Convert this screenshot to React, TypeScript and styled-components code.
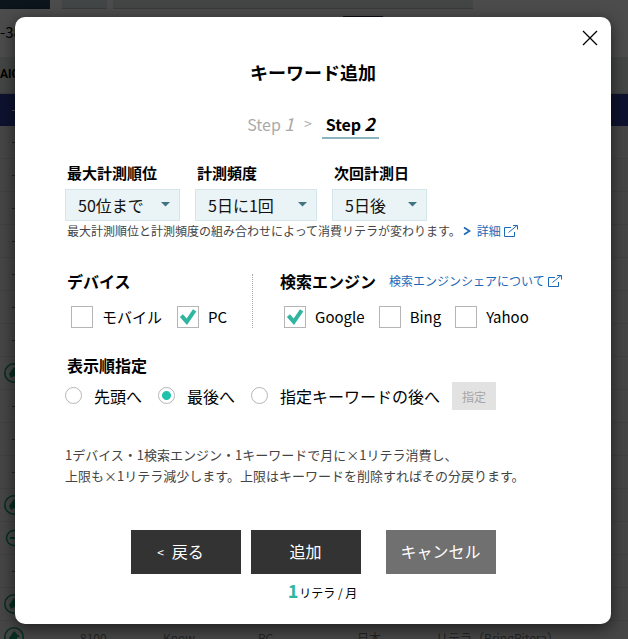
import React from "react";
import styled, { createGlobalStyle, css } from "styled-components";

const GlobalStyle = createGlobalStyle`
  *, *::before, *::after { box-sizing: border-box; }
  body {
    margin: 0;
    color: #000;
    background: #fff;
    font-family: "Noto Sans CJK JP", "Liberation Sans", sans-serif;
    font-size: 16px;
  }
  button, select, input { font: inherit; color: inherit; }
  h1, h2, p, fieldset { margin: 0; padding: 0; border: 0; }
`;

const Shell = styled.div`
  position: relative;
  height: 100vh;
  overflow: hidden;
`;

/* ---- page behind the dialog ---- */

const Page = styled.div`
  display: flex;
  flex-direction: column;
`;

const Toolbar = styled.div`
  display: flex;
  height: 16px;
  align-items: flex-start;
`;

const ToolBlock = styled.div<{ $width: number; $tone: string; $gap?: number }>`
  width: ${(p) => p.$width}px;
  height: 9px;
  margin-right: ${(p) => p.$gap ?? 0}px;
  background: ${(p) => p.$tone};
  border-bottom: 1px solid rgba(0, 0, 0, 0.15);
`;

const Marker = styled.div`
  width: 40px;
  height: 2px;
  margin-left: 343px;
  background: #26364c;
`;

const Range = styled.div`
  height: 39px;
  font-size: 15px;
  line-height: 28px;
  white-space: nowrap;
`;

const HeadRow = styled.div`
  height: 37px;
  line-height: 35px;
  background: #e4ebe7;
  border-bottom: 1px solid #c8d0cc;
  font-family: Roboto, sans-serif;
  font-size: 12px;
  font-weight: 700;
`;

const Row = styled.div<{ $active?: boolean }>`
  display: grid;
  grid-template-columns: 80px 83px 95px 99px 79px 1fr;
  align-items: center;
  height: ${(p) => (p.$active ? 32 : 33)}px;
  color: ${(p) => (p.$active ? "#fff" : "#777")};
  background: ${(p) => (p.$active ? "#303f9f" : "#e7ebe8")};
  border-bottom: 1px solid ${(p) => (p.$active ? "#303f9f" : "#d8ddda")};
  font-size: 12px;
  white-space: nowrap;
`;

const State = styled.span`
  display: flex;
  padding-left: 4px;
`;

const Overlay = styled.div`
  position: absolute;
  inset: 0;
  padding: 17px 17px 15px 15px;
  background: rgba(0, 0, 0, 0.7);
`;

/* ---- dialog ---- */

const Dialog = styled.section`
  position: relative;
  padding: 44px 50px 23px 50px;
  background: #fff;
  border-radius: 10px;
  box-shadow: 0 4px 16px rgba(0, 0, 0, 0.6);
`;

const CloseButton = styled.button`
  position: absolute;
  top: 12px;
  right: 12px;
  display: flex;
  padding: 0;
  border: 0;
  background: none;
  cursor: pointer;
`;

const Title = styled.h1`
  font-size: 18px;
  line-height: 22px;
  font-weight: 700;
  text-align: center;
`;

const Steps = styled.div`
  display: flex;
  justify-content: center;
  gap: 10px;
  margin-top: 30px;
  line-height: 20px;
  color: #aaa;
`;

const Step = styled.span<{ $current?: boolean }>`
  display: flex;
  align-items: baseline;
  gap: 3px;
  height: 26px;
  ${(p) =>
    p.$current &&
    css`
      padding: 0 4px;
      color: #000;
      font-weight: 700;
      border-bottom: 2px solid #8ab4bf;
    `}
  i { font-size: 18px; }
`;

const Arrow = styled.span`
  font-size: 14px;
`;

const Fields = styled.div`
  display: flex;
  gap: 15px;
  margin-top: 23px;
`;

const Field = styled.div`
  display: flex;
  flex-direction: column;
`;

const FieldLabel = styled.label`
  padding-left: 2px;
  font-size: 15px;
  line-height: 22px;
  font-weight: 700;
`;

const SelectBox = styled.div<{ $width: number }>`
  position: relative;
  width: ${(p) => p.$width}px;
  margin-top: 5px;
  svg {
    position: absolute;
    right: 10px;
    top: 13px;
    pointer-events: none;
  }
`;

const Select = styled.select`
  display: block;
  width: 100%;
  height: 32px;
  padding: 0 24px 0 12px;
  appearance: none;
  color: #111;
  background: #eaf3f5;
  border: 1px solid #d5e6eb;
  border-radius: 0;
`;

const Note = styled.p`
  display: flex;
  align-items: center;
  padding-left: 2px;
  color: #444;
  font-size: 12px;
  line-height: 20px;
  white-space: nowrap;
  svg { margin: 0 6px 0 2px; }
`;

const Link = styled.a`
  display: inline-flex;
  align-items: center;
  gap: 3px;
  color: #1c68b8;
  font-size: 12px;
  line-height: 20px;
  text-decoration: none;
  white-space: nowrap;
  && svg { margin: 0; }
`;

const Groups = styled.div`
  display: flex;
  margin-top: 28px;
`;

const OrderGroup = styled.div`
  margin-top: 25px;
`;

const Divider = styled.div`
  height: 54px;
  margin: 5px 27px 0 25px;
  border-left: 1px dotted #aaa;
`;

const GroupHead = styled.div`
  display: flex;
  gap: 13px;
  align-items: center;
  padding-left: 2px;
`;

const GroupHeadFlush = styled(GroupHead)`
  padding-left: 0;
`;

const Heading = styled.h2`
  font-size: 16px;
  line-height: 24px;
  font-weight: 700;
  white-space: nowrap;
`;

const Checks = styled.div<{ $inset: number; $gap: number }>`
  display: flex;
  gap: ${(p) => p.$gap}px;
  margin-top: 13px;
  padding-left: ${(p) => p.$inset}px;
`;

const Choice = styled.label<{ $small?: boolean }>`
  display: flex;
  align-items: center;
  gap: 9px;
  font-size: ${(p) => (p.$small ? 15 : 16)}px;
  line-height: 22px;
  white-space: nowrap;
`;

const CheckInput = styled.input`
  width: 22px;
  height: 22px;
  margin: 0;
  appearance: none;
  border: 1px solid #b5b5b5;
`;

const CheckBox = styled.span`
  position: relative;
  display: flex;
  svg {
    position: absolute;
    left: 2px;
    top: 2px;
    display: none;
    pointer-events: none;
  }
  input:checked + svg { display: block; }
`;

const Radios = styled.div`
  display: flex;
  align-items: center;
  gap: 16px;
  height: 28px;
  margin-top: 5px;
`;

const RadioInput = styled.input`
  width: 17px;
  height: 17px;
  margin: 0 3px 2px 0;
  appearance: none;
  border: 1px solid #b5b5b5;
  border-radius: 50%;
  &:checked {
    background: radial-gradient(circle, #20c3aa 4px, #fff 5px);
  }
`;

const PickButton = styled.button`
  height: 28px;
  margin-left: -4px;
  padding: 0 10px;
  color: #a5a5a5;
  background: #e2e2e2;
  border: 0;
  font-size: 12px;
`;

const Description = styled.p`
  margin-top: 34px;
  color: #444;
  font-size: 13px;
  line-height: 21px;
`;

const Actions = styled.div`
  display: flex;
  justify-content: center;
  gap: 10px;
  margin-top: 44px;
`;

const ActionColumn = styled.div`
  display: flex;
  flex-direction: column;
  align-items: center;
`;

const Action = styled.button<{ $muted?: boolean; $back?: boolean }>`
  width: 110px;
  height: 44px;
  padding: 0 ${(p) => (p.$back ? 10 : 0)}px 3px 0;
  margin-left: ${(p) => (p.$muted ? 15 : 0)}px;
  color: #fff;
  background: ${(p) => (p.$muted ? "#707070" : "#333")};
  border: 0;
  small { margin-right: 8px; font-size: 12px; vertical-align: 1px; }
`;

const Cost = styled.p`
  display: flex;
  align-items: baseline;
  gap: 1px;
  height: 20px;
  margin: 6px 0 1px 26px;
  padding-left: 8px;
  font-size: 12px;
  line-height: 20px;
  white-space: nowrap;
  strong { color: #2fb5a0; font-size: 18px; }
`;

const External = () => (
  <svg width="14" height="12" viewBox="0 0 14 12" fill="none" stroke="#1c68b8">
    <path d="M7 2.5H.5v9h10V7M4.5 7.5l8.5-7M9 .5h4.5v4" />
  </svg>
);

const Caret = () => (
  <svg width="9" height="5" viewBox="0 0 9 5">
    <path d="M0 0h9L4.5 4.5z" fill="#3f7480" />
  </svg>
);

function Rank({ kind }: { kind: string }) {
  if (kind === "dash")
    return <svg width="24" height="24"><path d="M8 12.5h8" stroke="currentColor" /></svg>;
  if (kind === "same")
    return (
      <svg width="24" height="24" fill="none" stroke="#159a68" strokeWidth="1.5">
        <circle cx="10" cy="12" r="7.5" /><path d="M6 12h8" strokeWidth="2" />
      </svg>
    );
  return (
    <svg width="24" height="24">
      <circle cx="10" cy="12" r="9.2" fill="none" stroke="#159a68" strokeWidth="1.6" />
      <path d="M10 6l6 6h-3v5l-3-2-3 2-2-4z" fill="#159a68" />
    </svg>
  );
}

type SelectFieldProps = { id: string; label: string; value: string; width: number };

function SelectField({ id, label, value, width }: SelectFieldProps) {
  return (
    <Field>
      <FieldLabel htmlFor={id}>{label}</FieldLabel>
      <SelectBox $width={width}>
        <Select id={id} defaultValue={value}><option>{value}</option></Select>
        <Caret />
      </SelectBox>
    </Field>
  );
}

function Check({ label, on }: { label: string; on?: boolean }) {
  return (
    <Choice $small>
      <CheckBox>
        <CheckInput type="checkbox" defaultChecked={on} />
        <svg width="18" height="18" viewBox="0 0 18 18" fill="none" stroke="#2fb5a0" strokeWidth="4">
          <path d="M2.4 7.6L7.8 13.8L15.6 2.4" />
        </svg>
      </CheckBox>
      {label}
    </Choice>
  );
}

function Radio({ label, on }: { label: string; on?: boolean }) {
  return (
    <Choice>
      <RadioInput type="radio" name="position" defaultChecked={on} />
      {label}
    </Choice>
  );
}

const rows = [
  "dash", "dash", "dash", "dash", "dash", "dash", "dash", "up",
  "dash", "dash", "dash", "up", "same", "dash", "up", "up",
];

export default function App() {
  return (
    <Shell>
      <GlobalStyle />
      <Page aria-hidden="true">
        <Toolbar>
          <ToolBlock $width={50} $tone="#2c465f" $gap={12} />
          <ToolBlock $width={45} $tone="#e0e9e9" $gap={6} />
          <ToolBlock $width={360} $tone="#e4ebe8" />
        </Toolbar>
        <Marker />
        <Range>-38</Range>
        <HeadRow>AIO</HeadRow>
        <Row $active><State><Rank kind="dash" /></State></Row>
        {rows.map((kind, i) => (
          <Row key={i}>
            <State><Rank kind={kind} /></State>
            {i === rows.length - 1 && (
              <>
                <span>8100</span><span>Know</span><span>PC</span><span>日本</span>
                <span>リテラ（BringRitera）</span>
              </>
            )}
          </Row>
        ))}
      </Page>
      <Overlay>
        <Dialog role="dialog" aria-modal="true" aria-labelledby="title">
          <CloseButton aria-label="閉じる">
            <svg width="18" height="18" stroke="#000" strokeWidth="1.3">
              <path d="M2 2l14 14M16 2L2 16" />
            </svg>
          </CloseButton>
          <Title id="title">キーワード追加</Title>
          <Steps>
            <Step>Step<i>1</i></Step>
            <Arrow>&gt;</Arrow>
            <Step $current>Step<i>2</i></Step>
          </Steps>

          <Fields>
            <SelectField id="rank" label="最大計測順位" value="50位まで" width={115} />
            <SelectField id="freq" label="計測頻度" value="5日に1回" width={122} />
            <SelectField id="next" label="次回計測日" value="5日後" width={95} />
          </Fields>
          <Note>
            最大計測順位と計測頻度の組み合わせによって消費リテラが変わります。
            <svg width="8" height="10" fill="none" stroke="#1c68b8" strokeWidth="1.7">
              <path d="M1 1.5L6.5 5L1 8.5" />
            </svg>
            <Link href="#detail">詳細<External /></Link>
          </Note>

          <Groups>
            <div>
              <GroupHead><Heading>デバイス</Heading></GroupHead>
              <Checks $inset={6} $gap={15}>
                <Check label="モバイル" />
                <Check label="PC" on />
              </Checks>
            </div>
            <Divider />
            <div>
              <GroupHeadFlush>
                <Heading>検索エンジン</Heading>
                <Link href="#share">検索エンジンシェアについて<External /></Link>
              </GroupHeadFlush>
              <Checks $inset={4} $gap={14}>
                <Check label="Google" on />
                <Check label="Bing" />
                <Check label="Yahoo" />
              </Checks>
            </div>
          </Groups>

          <OrderGroup>
            <GroupHead><Heading>表示順指定</Heading></GroupHead>
            <Radios role="radiogroup" aria-label="表示順指定">
              <Radio label="先頭へ" />
              <Radio label="最後へ" on />
              <Radio label="指定キーワードの後へ" />
              <PickButton disabled>指定</PickButton>
            </Radios>
          </OrderGroup>

          <Description>
            1デバイス・1検索エンジン・1キーワードで月に×1リテラ消費し、<br />
            上限も×1リテラ減少します。上限はキーワードを削除すればその分戻ります。
          </Description>

          <Actions>
            <Action $back><small>&lt;</small>戻る</Action>
            <ActionColumn>
              <Action>追加</Action>
              <Cost><strong>1</strong>リテラ / 月</Cost>
            </ActionColumn>
            <Action $muted>キャンセル</Action>
          </Actions>
        </Dialog>
      </Overlay>
    </Shell>
  );
}
